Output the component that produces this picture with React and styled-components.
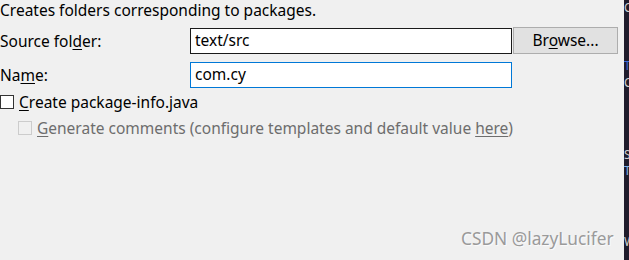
import React from "react";
import styled, { createGlobalStyle } from "styled-components";

const Global = createGlobalStyle`
  html, body { margin: 0; padding: 0; background: #f0f0f0; }
  body { width: 629px; height: 260px; overflow: hidden; font-family: "Noto Sans", "Open Sans", sans-serif; }
`;

const Page = styled.div`
  position: relative;
  display: flex;
  width: 629px;
  height: 260px;
  background: #f0f0f0;
`;

const Main = styled.div`
  flex: 1;
  display: flex;
  flex-direction: column;
  font-size: 15.5px;
  color: #000;
`;

const Desc = styled.div`
  height: 21px;
  line-height: 21px;
  white-space: nowrap;
`;

const Row = styled.div`
  display: flex;
  align-items: center;
  height: 27px;
  margin-top: ${(p) => p.$mt || 0}px;
`;

const Label = styled.div`
  width: 190px;
  white-space: nowrap;
`;

const Input = styled.div`
  box-sizing: border-box;
  width: 322px;
  height: 26px;
  border: 1px solid ${(p) => (p.$focused ? "#0078d7" : "#1a1a1a")};
  background: #fff;
  padding-left: 4px;
  line-height: 23px;
  white-space: nowrap;
`;

const Button = styled.div`
  box-sizing: border-box;
  margin-left: 1px;
  width: 105px;
  height: 27px;
  border: 1px solid #adadad;
  background: #e1e1e1;
  text-align: center;
  line-height: 24px;
`;

const U = styled.span`
  text-decoration: underline;
  text-underline-offset: 2px;
`;

const CheckRow = styled.div`
  display: flex;
  align-items: center;
  height: 20px;
  margin-top: ${(p) => p.$mt || 0}px;
  padding-left: ${(p) => p.$indent || 0}px;
  color: ${(p) => (p.$disabled ? "#6d6d6d" : "#000")};
  white-space: nowrap;
`;

const Box = styled.span`
  box-sizing: border-box;
  flex: none;
  width: 14px;
  height: 14px;
  border: 1px solid ${(p) => (p.$disabled ? "#cccccc" : "#333")};
  background: ${(p) => (p.$disabled ? "#f0f0f0" : "#fff")};
  margin-right: 5px;
`;

const Strip = styled.div`
  width: 5px;
  background: #1f1c2c;
  overflow: hidden;
  position: relative;
  font-family: "Noto Sans", sans-serif;
  font-size: 12px;
  line-height: 12px;
`;

const StripChar = styled.div`
  position: absolute;
  left: 0;
  top: ${(p) => p.$top}px;
  color: ${(p) => p.$color || "#d0d0d0"};
`;

const Watermark = styled.div`
  position: absolute;
  left: 461px;
  top: 227px;
  font-family: "Noto Sans", sans-serif;
  font-size: 17.3px;
  color: #9a9a9a;
  text-shadow: 1px 1px 1px rgba(255,255,255,0.8);
  white-space: nowrap;
`;

export default function App() {
  return (
    <>
      <Global />
      <Page>
        <Main>
          <Desc>Creates folders corresponding to packages.</Desc>
          <Row $mt={6}>
            <Label>Source fol<U>d</U>er:</Label>
            <Input>text/src</Input>
            <Button>Br<U>o</U>wse...</Button>
          </Row>
          <Row $mt={7}>
            <Label>Na<U>m</U>e:</Label>
            <Input $focused>com.cy</Input>
          </Row>
          <CheckRow $mt={4}>
            <Box />
            <span><U>C</U>reate package-info.java</span>
          </CheckRow>
          <CheckRow $mt={6} $indent={18} $disabled>
            <Box $disabled />
            <span><U>G</U>enerate comments (configure templates and default value <U>here</U>)</span>
          </CheckRow>
        </Main>
        <Strip>
          <StripChar $top={2}>C</StripChar>
          <StripChar $top={60} $color="#3c6cd8">T</StripChar>
          <StripChar $top={77}>C</StripChar>
          <StripChar $top={149}>S</StripChar>
          <StripChar $top={165} $color="#7fb2e8">T</StripChar>
          <StripChar $top={236}>W</StripChar>
        </Strip>
        <Watermark>CSDN @lazyLucifer</Watermark>
      </Page>
    </>
  );
}
